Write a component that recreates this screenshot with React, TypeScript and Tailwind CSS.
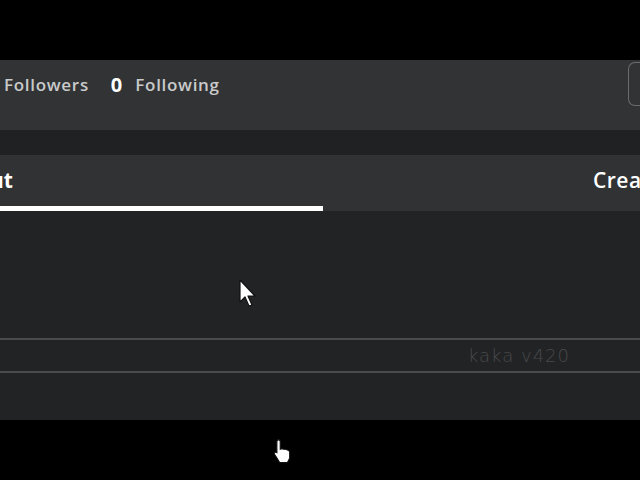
import React from 'react'

function Arrow() {
  return (
    <svg width="20" height="30" viewBox="0 0 20 30">
      <path d="M1 1 L1 23 L6 18 L10 27 L13 26 L9 17 L16 17 Z" fill="#fff" stroke="#111" strokeWidth="1.2" strokeLinejoin="round" />
    </svg>
  )
}

function Hand() {
  return (
    <svg width="20" height="27" viewBox="0 0 18 24">
      <path
        d="M5 1.5 C6 1.5 6.5 2 6.5 3 L6.5 10 L8 9.5 L9.5 10 L11 10 L12.5 10.5 L14 11 L15 12 L15 18 L13 22 L6 22 L3 17 L1 14 L2 12.5 L3.5 13 L3.5 3 C3.5 2 4 1.5 5 1.5 Z"
        fill="#fff"
        stroke="#111"
        strokeWidth="1"
      />
    </svg>
  )
}

export default function App() {
  return (
    <div className="relative w-[640px] h-[480px] bg-black overflow-hidden flex flex-col font-['Open_Sans',sans-serif]">
      <div className="h-[60px] bg-black" />

      {/* profile header */}
      <div className="h-[70px] bg-[#313335] flex items-start">
        <div className="flex items-center h-[48px] pt-[2px] pl-[4px] text-[17px] font-semibold text-[#c9caca] tracking-[0.7px]">
          <span>Followers</span>
          <span className="ml-[22px] text-white font-bold text-[20px] tracking-normal">0</span>
          <span className="ml-[13px]">Following</span>
        </div>
        <div className="ml-auto mt-[2px] w-[12px] h-[44px] rounded-l-[7px] border border-r-0 border-[#6a6c6e]" />
      </div>

      <div className="h-[25px] bg-[#202123]" />

      {/* tabs */}
      <div className="h-[56px] bg-[#303234] flex flex-col">
        <div className="flex-1 flex items-center justify-between text-[21px] font-bold text-white">
          <span className="-ml-[10px]">ut</span>
          <span className="-mr-[23px] font-semibold tracking-[0.5px]">Create</span>
        </div>
        <div className="w-[323px] h-[5px] bg-white" />
      </div>

      {/* content */}
      <div className="h-[209px] bg-[#222325] flex flex-col">
        <div className="h-[127px]" />
        <div className="h-[2px] bg-[#4a4b4d]" />
        <div className="h-[31px] flex items-center justify-end pr-[70px] text-[18px] text-[#48494b] font-['DejaVu_Sans',sans-serif] font-extralight tracking-[1px]">
          kaka v420
        </div>
        <div className="h-[2px] bg-[#4a4b4d]" />
      </div>

      <div className="flex-1 bg-black" />

      <div className="absolute left-[239px] top-[279px]">
        <Arrow />
      </div>
      <div className="absolute left-[273px] top-[438px]">
        <Hand />
      </div>
    </div>
  )
}
